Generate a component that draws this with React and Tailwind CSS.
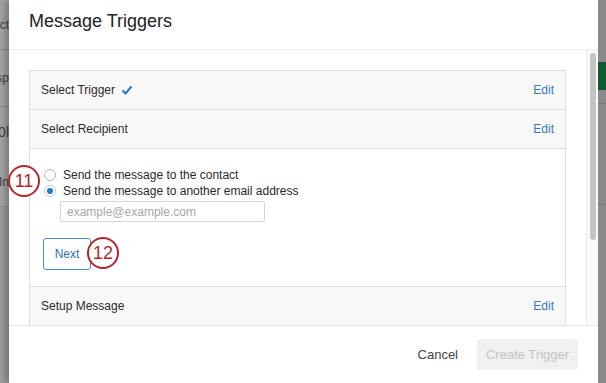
import React from 'react';

const font = { fontFamily: '"Liberation Sans", Arial, sans-serif' };

function Row({ label, check }) {
  return (
    <div className="h-[39px] flex items-center justify-between px-[11px] bg-[#f8f8f8] border-b border-[#dedede]">
      <div className="flex items-center gap-[6px] text-[12px] text-[#2a2a2a]">
        <span>{label}</span>
        {check && (
          <svg width="12" height="10" viewBox="0 0 12 10">
            <path d="M1.5 5.5 L4.5 8.5 L10.5 1.5" fill="none" stroke="#2b7bc1" strokeWidth="2" />
          </svg>
        )}
      </div>
      <span className="text-[12px] text-[#3a78bd]">Edit</span>
    </div>
  );
}

function Badge({ n, className }) {
  return (
    <div className={`absolute w-[32px] h-[32px] rounded-full border-[2px] border-[#b3262d] bg-white flex items-center justify-center text-[18px] text-[#b3262d] ${className}`}>
      {n}
    </div>
  );
}

export default function App() {
  return (
    <div className="relative w-[606px] h-[383px] flex overflow-hidden bg-[#8e8e8e]" style={font}>
      {/* dimmed page behind the modal */}
      <div className="w-[9px] flex flex-col bg-[#a4a4a4] text-[12px] text-[#3f3f3f]">
        <div className="h-[50px] flex items-center justify-end overflow-hidden whitespace-nowrap border-b border-[#8c8c8c]">Select</div>
        <div className="h-[57px] flex items-center justify-end overflow-hidden whitespace-nowrap border-b border-[#8c8c8c]">Resp</div>
        <div className="h-[50px] flex items-center justify-end overflow-hidden whitespace-nowrap text-[14px]">0l</div>
        <div className="h-[50px] flex items-center justify-end overflow-hidden whitespace-nowrap border-b border-[#8c8c8c]">In</div>
        <div className="flex-1 bg-[#9c9c9c]"></div>
      </div>

      <div className="w-[589px] flex flex-col bg-white shadow-[-4px_0_6px_rgba(0,0,0,0.25)]">
        <div className="h-[50px] flex items-center pl-[20px] border-b border-[#ececec]">
          <h1 className="text-[18px] text-[#222] pb-[6px]">Message Triggers</h1>
        </div>

        <div className="h-[275px] flex overflow-hidden">
          <div className="flex-1 pl-[20px] pr-[20px] pt-[20px]">
            <div className="border border-[#dedede] border-b-0">
              <Row label="Select Trigger" check />
              <Row label="Select Recipient" />
              <div className="h-[138px] bg-white border-b border-[#dedede] pl-[14px] pt-[20px]">
                <label className="flex items-center gap-[7px] text-[12px] text-[#2a2a2a] h-[12px]">
                  <span className="w-[12px] h-[12px] rounded-full border border-[#b8b8b8] bg-white"></span>
                  Send the message to the contact
                </label>
                <label className="flex items-center gap-[7px] text-[12px] text-[#2a2a2a] h-[12px] mt-[4px]">
                  <span className="w-[12px] h-[12px] rounded-full border border-[#c8c8c8] bg-white flex items-center justify-center">
                    <span className="w-[6px] h-[6px] rounded-full bg-[#1f7ad1]"></span>
                  </span>
                  Send the message to another email address
                </label>
                <div className="ml-[16px] mt-[4px] w-[205px] h-[21px] border border-[#cfd6dc] rounded-[2px] flex items-center px-[6px] text-[12px] text-[#a8a8a8]">
                  example@example.com
                </div>
                <button className="mt-[16px] -ml-[1px] w-[48px] h-[32px] border border-[#4a8ad0] rounded-[3px] text-[12px] text-[#2e6fb7] bg-white">
                  Next
                </button>
              </div>
              <Row label="Setup Message" />
            </div>
          </div>
          <div className="w-[12px] border-l border-[#ececec] bg-[#fafafa] pt-[3px] flex justify-center">
            <div className="w-[6px] h-[187px] rounded-full bg-[#c3c3c3]"></div>
          </div>
        </div>

        <div className="flex-1 border-t border-[#e6e6e6] flex items-center justify-end gap-[19px] pr-[20px]">
          <span className="text-[13px] text-[#444]">Cancel</span>
          <button className="w-[101px] h-[31px] rounded-[3px] bg-[#f0f0f0] text-[13px] text-[#c4c4c4]">Create Trigger</button>
        </div>
      </div>

      <div className="w-[8px] flex flex-col bg-[#8a8a8a]">
        <div className="h-[62px]"></div>
        <div className="h-[28px] bg-[#0f5a2f]"></div>
        <div className="h-[14px] border-b border-[#7a7a7a]"></div>
        <div className="h-[101px] border-b border-[#7a7a7a]"></div>
        <div className="flex-1"></div>
      </div>

      <Badge n="11" className="left-[8px] top-[165px]" />
      <Badge n="12" className="left-[87px] top-[237px]" />
    </div>
  );
}
